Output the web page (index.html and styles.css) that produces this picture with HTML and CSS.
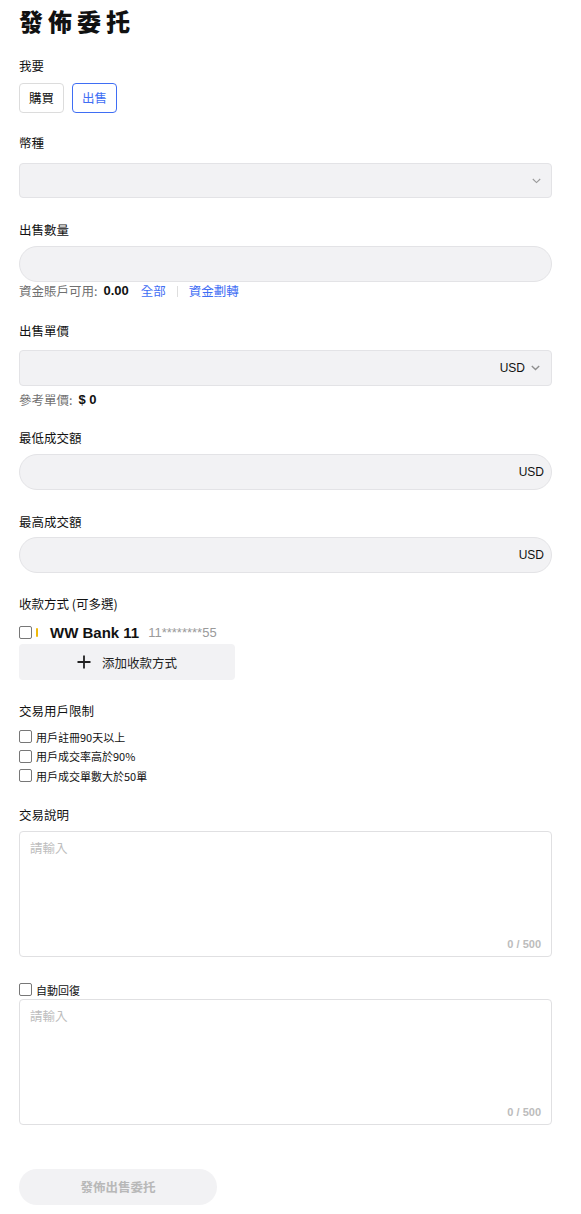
FILE: index.html
```html
<!DOCTYPE html>
<html lang="zh-Hant">
<head>
<meta charset="utf-8">
<title>發佈委托</title>
<link rel="stylesheet" href="styles.css">
</head>
<body>
<div class="page">
  <h1 class="title">發佈委托</h1>

  <!-- side -->
  <div class="field f-side">
    <div class="label">我要</div>
    <div class="sides">
      <span class="side">購買</span>
      <span class="side active">出售</span>
    </div>
  </div>

  <div class="field f-coin">
    <div class="label gap-wide">幣種</div>
    <div class="box rect">
      <span class="grow"></span>
      <svg class="chev" width="9" height="6" viewBox="0 0 9 6"><polyline points="0.8,1 4.5,4.6 8.2,1" fill="none" stroke="#9a9a9a" stroke-width="1.1"/></svg>
    </div>
  </div>

  <div class="field f-qty">
    <div class="label">出售數量</div>
    <div class="box pill"></div>
    <div class="hint">
      <span class="muted">資金賬戶可用:</span>
      <b class="num">0.00</b>
      <a class="link">全部</a>
      <span class="sep"></span>
      <a class="link">資金劃轉</a>
    </div>
  </div>

  <div class="field f-price">
    <div class="label gap-price">出售單價</div>
    <div class="box rect">
      <span class="grow"></span>
      <span class="unit">USD</span>
      <svg class="chev small" width="9" height="6" viewBox="0 0 9 6"><polyline points="0.8,1 4.5,4.6 8.2,1" fill="none" stroke="#8f8f8f" stroke-width="1.4"/></svg>
    </div>
    <div class="hint ref">
      <span class="muted">參考單價:</span>
      <b class="num">$ 0</b>
    </div>
  </div>

  <div class="field f-min">
    <div class="label">最低成交額</div>
    <div class="box pill"><span class="grow"></span><span class="unit">USD</span></div>
  </div>

  <div class="field f-max">
    <div class="label gap-max">最高成交額</div>
    <div class="box pill"><span class="grow"></span><span class="unit">USD</span></div>
  </div>

  <div class="field f-pay">
    <div class="label">收款方式 (可多選)</div>
    <div class="bank">
      <span class="check"></span>
      <span class="bar"></span>
      <span class="bank-name">WW Bank 11</span>
      <span class="bank-no">11********55</span>
    </div>
    <div class="add-pay">
      <svg width="14" height="14" viewBox="0 0 14 14"><path d="M7 0.5V13.5M0.5 7H13.5" stroke="#222" stroke-width="1.8" fill="none"/></svg>
      <span>添加收款方式</span>
    </div>
  </div>

  <div class="field f-limit">
    <div class="label">交易用戶限制</div>
    <div class="checks">
      <div class="opt"><span class="check"></span>用戶註冊90天以上</div>
      <div class="opt"><span class="check"></span>用戶成交率高於90%</div>
      <div class="opt"><span class="check"></span>用戶成交單數大於50單</div>
    </div>
  </div>

  <div class="field f-note">
    <div class="label">交易說明</div>
    <div class="textbox">
      <span class="ph">請輸入</span>
      <span class="count">0 / 500</span>
    </div>
  </div>

  <div class="field f-auto">
    <div class="opt auto"><span class="check"></span>自動回復</div>
    <div class="textbox">
      <span class="ph">請輸入</span>
      <span class="count">0 / 500</span>
    </div>
  </div>

  <div class="submit">發佈出售委托</div>
</div>
</body>
</html>
```

FILE: styles.css
```css
body
{
	margin:0;
	background:#fff;
	color:#121212;
	font-family:"Liberation Sans","Noto Sans CJK TC",sans-serif;
	font-size:12.5px;
}
.page
{
	width:533px;
	padding:5px 0 20px 19px;
}
.title
{
	margin:0;
	height:32px;
	line-height:32px;
	font-family:"Noto Sans CJK TC",sans-serif;
	font-size:24px;
	font-weight:900;
	letter-spacing:5px;
	color:#111;
}
.field
{
	margin-top:21px;
}
.f-side { margin-top:20px; }
.f-qty { margin-top:23px; }
.f-price { margin-top:22px; }
.f-min { margin-top:20px; }
.f-max { margin-top:23px; }
.f-pay { margin-top:22px; }
.f-limit { margin-top:22px; }
.f-note { margin-top:20px; }
.f-auto { margin-top:24px; }

.label
{
	font-family:"Noto Sans CJK TC",sans-serif;
	font-size:12.5px;
	line-height:18px;
	margin-bottom:7px;
}
.f-side .label { margin-bottom:8px; }
.label.gap-wide { margin-bottom:11px; }
.label.gap-price { margin-bottom:10px; }
.label.gap-max { margin-bottom:6px; }

.sides
{
	display:flex;
	gap:8px;
}
.side
{
	height:28px;
	line-height:28px;
	padding:0 9px;
	border:1px solid #dcdcdc;
	border-radius:4px;
	font-family:"Noto Sans CJK TC",sans-serif;
	font-size:12.5px;
}
.side.active
{
	border-color:#3f6ef4;
	color:#3f6ef4;
}

.box
{
	display:flex;
	align-items:center;
	box-sizing:border-box;
	height:36px;
	background:#f2f2f4;
	border:1px solid #e3e3e6;
	padding:0 7px 0 12px;
}
.box.rect
{
	border-radius:4px;
}
.f-coin .box { height:35px; }
.box.pill
{
	border-radius:18px;
}
.grow
{
	flex:1;
}
.chev
{
	margin-right:3px;
}
.chev.small
{
	margin-left:6px;
	margin-right:4px;
}
.unit
{
	font-size:12px;
	color:#111;
}

.hint
{
	display:flex;
	align-items:center;
	height:18px;
	line-height:18px;
	font-family:"Noto Sans CJK TC",sans-serif;
}
.hint.ref
{
	margin-top:5px;
}
.muted
{
	color:#707070;
}
.num
{
	font-family:"Liberation Sans",sans-serif;
	font-size:13px;
	margin-left:6px;
	margin-right:12px;
	color:#111;
}
.link
{
	color:#3f6ef4;
}
.sep
{
	width:1px;
	height:11px;
	background:#dedede;
	margin:0 11px;
}

.check
{
	display:inline-block;
	box-sizing:border-box;
	width:13px;
	height:13px;
	border:1.3px solid #777;
	border-radius:2px;
	background:#fff;
}
.bank
{
	display:flex;
	align-items:center;
	height:20px;
	margin-top:9px;
}
.bar
{
	width:2px;
	height:9px;
	background:#f0b90b;
	margin-left:4px;
	border-radius:1px;
}
.bank-name
{
	font-size:15px;
	font-weight:bold;
	margin-left:12px;
}
.bank-no
{
	font-size:13px;
	color:#9a9a9a;
	margin-left:9px;
}
.add-pay
{
	display:flex;
	align-items:center;
	justify-content:center;
	gap:11px;
	width:216px;
	height:36px;
	margin-top:2px;
	background:#f2f2f4;
	border-radius:4px;
	font-family:"Noto Sans CJK TC",sans-serif;
	font-size:12.5px;
	color:#222;
}

.checks
{
	margin-top:7px;
}
.opt
{
	display:flex;
	align-items:center;
	gap:4px;
	height:19.5px;
	font-family:"Noto Sans CJK TC",sans-serif;
	font-size:11px;
}
.opt.auto
{
	height:18px;
}

.textbox
{
	display:flex;
	flex-direction:column;
	justify-content:space-between;
	box-sizing:border-box;
	height:126px;
	border:1px solid #e0e0e2;
	border-radius:4px;
	padding:7px 10px 4px 10px;
}
.ph
{
	line-height:18px;
	font-family:"Noto Sans CJK TC",sans-serif;
	font-size:12.5px;
	color:#bdbdbd;
}
.count
{
	align-self:flex-end;
	line-height:16px;
	font-size:11px;
	font-weight:bold;
	color:#bcbcbc;
}

.submit
{
	width:198px;
	height:36px;
	line-height:36px;
	margin-top:44px;
	text-align:center;
	background:#f2f2f4;
	border-radius:18px;
	font-family:"Noto Sans CJK TC",sans-serif;
	font-size:12.5px;
	font-weight:bold;
	color:#b8b8b8;
}
```
